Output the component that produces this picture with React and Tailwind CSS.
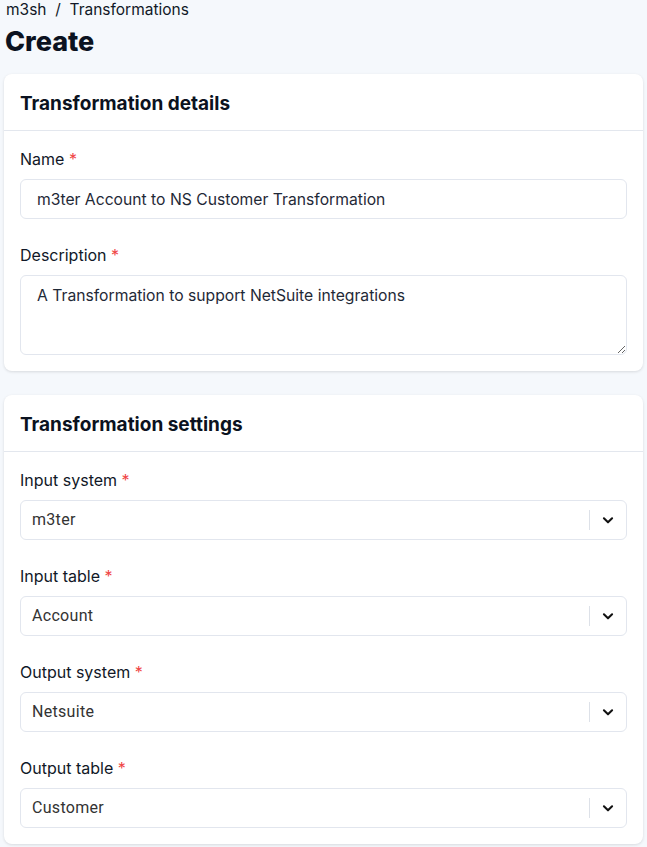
import React from 'react'

function Label({ children }) {
  return (
    <label className="mb-2 block text-[16px] leading-6 text-[#111827]">
      {children} <span className="text-[#ef4444]">*</span>
    </label>
  )
}

function Select({ value }) {
  return (
    <div className="flex h-10 items-center rounded-md border border-[#e2e6ee] bg-white">
      <span className="flex-1 pl-[11px] font-['Roboto',sans-serif] text-[16px] tracking-[0.3px] text-[#333]">{value}</span>
      <span className="h-5 w-px bg-[#dde1e8]"></span>
      <span className="flex w-9 items-center justify-center">
        <svg width="14" height="14" viewBox="0 0 24 24" fill="none" stroke="#111" strokeWidth="3.5" strokeLinecap="round" strokeLinejoin="round">
          <path d="M5 9l7 7 7-7" />
        </svg>
      </span>
    </div>
  )
}

function Card({ title, children }) {
  return (
    <div className="rounded-lg bg-white shadow-[0_1px_3px_rgba(0,0,0,0.12)]">
      <div className="border-b border-[#e3e7ee] px-4 pt-[18px] pb-[14px]">
        <h2 className="text-[19px] leading-6 font-bold text-[#0b1220]">{title}</h2>
      </div>
      <div className="flex flex-col gap-6 p-4">{children}</div>
    </div>
  )
}

export default function App() {
  return (
    <div className="min-h-screen bg-[#f5f8fc] px-1 font-['Inter',sans-serif]">
      <div className="px-0.5 text-[15.5px] leading-5 text-[#111827]">m3sh&nbsp; / &nbsp;Transformations</div>
      <h1 className="mt-1.5 mb-4 px-px text-[27px] leading-8 font-extrabold text-[#0b1220]">Create</h1>
      <div className="flex flex-col gap-6 pb-6">
        <Card title="Transformation details">
          <div>
            <Label>Name</Label>
            <input
              className="h-10 w-full rounded-md border border-[#e2e6ee] px-4 text-[15.7px] text-[#1f2937] outline-none"
              defaultValue="m3ter Account to NS Customer Transformation"
            />
          </div>
          <div>
            <Label>Description</Label>
            <textarea
              className="block h-20 w-full rounded-md border border-[#e2e6ee] px-4 py-2.5 text-[15.7px] leading-5 text-[#1f2937] outline-none"
              defaultValue="A Transformation to support NetSuite integrations"
            />
          </div>
        </Card>
        <Card title="Transformation settings">
          <div>
            <Label>Input system</Label>
            <Select value="m3ter" />
          </div>
          <div>
            <Label>Input table</Label>
            <Select value="Account" />
          </div>
          <div>
            <Label>Output system</Label>
            <Select value="Netsuite" />
          </div>
          <div>
            <Label>Output table</Label>
            <Select value="Customer" />
          </div>
        </Card>
      </div>
    </div>
  )
}
